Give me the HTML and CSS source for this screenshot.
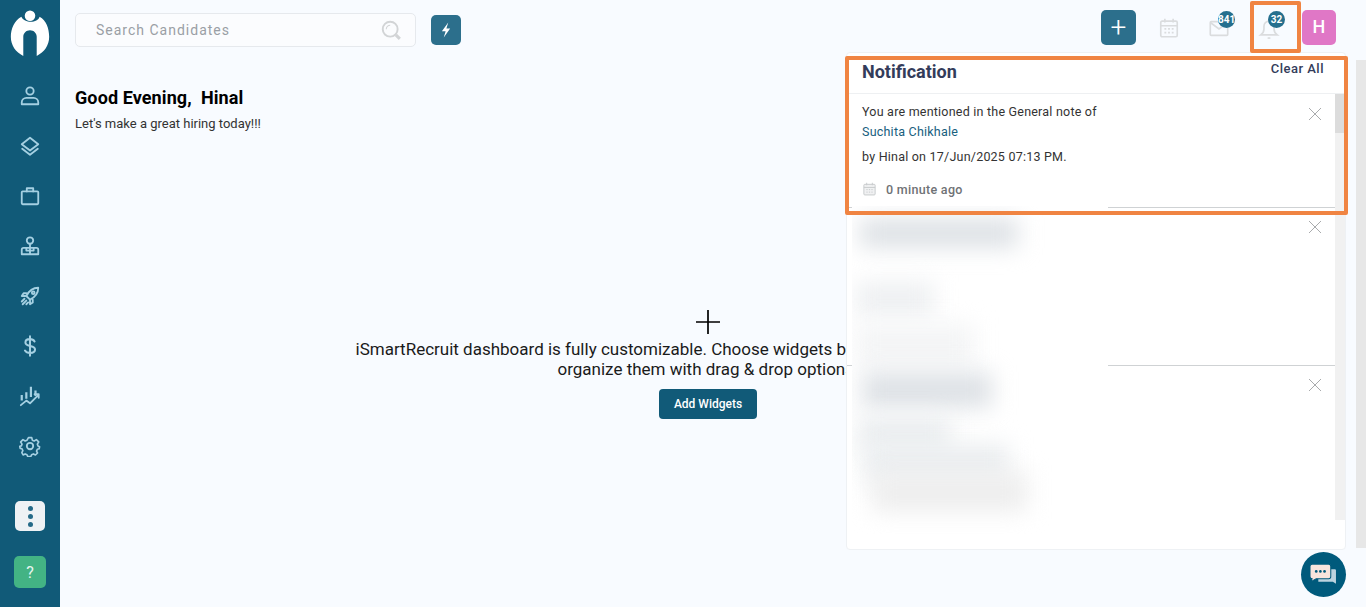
FILE: index.html
```html
<!DOCTYPE html>
<html lang="en">
  <head>
    <meta charset="UTF-8" />
    <title>iSmartRecruit Dashboard</title>
    <link rel="stylesheet" href="styles.css">
  </head>
  <body>
    <aside class="sidebar">
      <svg class="logo" viewBox="0 0 40 48" aria-hidden="true">
        <path d="M11 7C4 11 0 19 0 28c0 9 5 16 13 20V28c0-4 3-7 7-7s7 3 7 7v20c8-4 13-11 13-20 0-9-3-17-10-21-2 7-16 7-19 0z" fill="#fff"/>
        <circle cx="20" cy="6" r="5.5" fill="#fff"/>
      </svg>
      <nav class="side-nav">
        <a href="#"><svg viewBox="0 0 24 24"><circle cx="12" cy="6.500" r="4"/><path d="M3 21v-2c0-3 2.500-5 5-5h8c2.500 0 5 2 5 5v2z"/></svg></a>
        <a href="#"><svg viewBox="0 0 24 24"><path d="M12 3l9 7-9 7-9-7z"/><path d="M3.500 15l8.500 6.500 8.500-6.500"/></svg></a>
        <a href="#"><svg viewBox="0 0 24 24"><rect x="3" y="7" width="18" height="14" rx="1"/><path d="M8.500 7V3.500h7V7"/></svg></a>
        <a href="#"><svg viewBox="0 0 24 24"><circle cx="12" cy="6" r="3.500"/><path d="M12 10v11M3 21v-5c0-1 1-2 2-2h14c1 0 2 1 2 2v5zM8 14v3h8v-3"/></svg></a>
        <a href="#"><svg viewBox="0 0 24 24"><path d="M21 3c-6 0-10 3-13 9l4 4c6-3 9-7 9-13z"/><circle cx="15.500" cy="8.500" r="1.500"/><path d="M8 9H5l-2 3h4M15 16v3l-3 2v-4M6 15l-3 3M8 17l-4 4M10 19l-2 2"/></svg></a>
        <a href="#"><svg viewBox="0 0 24 24"><path d="M12 1.500v21M17 7c-1-1.600-2.800-2.500-5-2.500-3 0-5 1.500-5 3.700 0 5.100 10.500 2.500 10.500 7.600 0 2.200-2.300 3.700-5.500 3.700-2.500 0-4.500-1-5.500-2.600" stroke-width="2.200"/></svg></a>
        <a href="#"><svg viewBox="0 0 24 24"><path d="M3 11v6M8 8v7M13 2v11M18 6v6" stroke-width="2.400" stroke-linecap="butt"/><path d="M2 22l6-5 4 3 9-9M17 10h4.500v4"/></svg></a>
        <a href="#"><svg viewBox="0 0 24 24"><circle cx="12" cy="12" r="3.500"/><path d="M10 2h4l.7 3 2.300 1 2.600-1.600 2.800 2.800L20.800 9.800l.8 2.200 1.900 1-.5 2.500-2.200.5-1 2.300 1.200 2.300-2.500 2.400-2.500-1.300-2.200 1-1 2.300h-3.600l-1-2.300-2.200-1-2.500 1.300L2 20.100l1.200-2.300-1-2.300L0 15l-.5-2.500L1.400 12l.8-2.200L.6 7.200l2.800-2.800L6 6l2.300-1z" transform="translate(1.300 1.100) scale(.9)"/></svg></a>
      </nav>
      <button class="more-btn"><span></span><span></span><span></span></button>
      <button class="help-btn">?</button>
    </aside>

    <main class="main-area">
      <header class="topbar">
        <div class="search">
          <span>Search Candidates</span>
          <svg viewBox="0 0 24 24"><circle cx="10.500" cy="10.500" r="8.500"/><path d="M17 17l4.500 4.500" stroke-width="3.500"/><path d="M6 10.500a4.500 4.500 0 0 1 4.500-4.500" stroke-width="1.200"/></svg>
        </div>
        <button class="bolt-btn"><svg viewBox="0 0 24 24"><path d="M15 2L6.500 13.500h5L9 22l8.500-12h-5z"/></svg></button>
        <div class="top-actions">
          <button class="add-btn">+</button>
          <span class="top-icon"><svg viewBox="0 0 24 24"><rect x="3" y="4.500" width="18" height="17" rx="1.500"/><path d="M3 9.500h18M7.500 2v4M16.500 2v4M7 13h2M11 13h2M15 13h2M7 17h2M11 17h2M15 17h2"/></svg></span>
          <span class="top-icon"><svg viewBox="0 0 24 24"><rect x="2.500" y="5" width="19" height="15" rx="1"/><path d="M2.500 6l9.500 7 9.500-7"/></svg><b class="badge">841</b></span>
          <span class="top-icon"><svg viewBox="0 0 24 24"><path d="M3 19.500c2-1.500 3.500-3 3.500-6.500V10a5.500 5.500 0 0 1 11 0v3c0 3.500 1.500 5 3.500 6.500z"/><path d="M10.500 23h3"/></svg><b class="badge">32</b></span>
          <span class="avatar">H</span>
        </div>
      </header>

      <section class="greeting">
        <h1>Good Evening,&nbsp; Hinal</h1>
        <p>Let's make a great hiring today!!!</p>
      </section>

      <section class="empty-state">
        <svg viewBox="0 0 24 24"><path d="M12 0v24M0 12h24"/></svg>
        <p>iSmartRecruit dashboard is fully customizable. Choose widgets based on your preference and<br>organize them with drag &amp; drop options.</p>
        <button>Add Widgets</button>
      </section>
    </main>

    <div class="page-scroll"></div>

    <section class="notif-panel">
      <div class="notif-head">
        <h2>Notification</h2>
        <a href="#">Clear All</a>
      </div>
      <div class="notif-body">
        <div class="notif-list">
          <article class="notif-item first">
            <p>You are mentioned in the General note of</p>
            <p><a href="#">Suchita Chikhale</a></p>
            <p class="by">by Hinal on 17/Jun/2025 07:13 PM.</p>
            <div class="when">
              <svg viewBox="0 0 24 24"><rect x="3" y="4.500" width="18" height="17" rx="1.500"/><path d="M3 9.500h18M7.500 2v4M16.500 2v4M7 13h2M11 13h2M15 13h2M7 17h2M11 17h2M15 17h2"/></svg>
              0 minute ago
            </div>
            <svg class="close" viewBox="0 0 14 14"><path d="M1 1l12 12M13 1L1 13"/></svg>
          </article>
          <article class="notif-item second">
            <svg class="close" viewBox="0 0 14 14"><path d="M1 1l12 12M13 1L1 13"/></svg>
          </article>
          <article class="notif-item third">
            <svg class="close" viewBox="0 0 14 14"><path d="M1 1l12 12M13 1L1 13"/></svg>
          </article>
        </div>
        <div class="notif-scroll"><div></div></div>
        <div class="blur-cover">
          <i class="b1"></i><i class="b2"></i><i class="b3"></i><i class="b4"></i><i class="b5"></i><i class="b6"></i><i class="b7"></i>
        </div>
      </div>
    </section>

    <div class="mark mark-bell"></div>
    <div class="mark mark-panel"></div>

    <button class="chat-btn">
      <svg viewBox="0 0 26 22"><path d="M8 6h16a1 1 0 0 1 1 1v13l-3-2H8z" fill="#bcd3df"/><path d="M2 1h16a2 2 0 0 1 2 2v10a2 2 0 0 1-2 2H6l-5 3 1-3a2 2 0 0 1-2-2V3a2 2 0 0 1 2-2z" fill="#f8e4dd" stroke="#005a7c"/><circle cx="6" cy="8" r="1.300" fill="#005a7c"/><circle cx="10" cy="8" r="1.300" fill="#005a7c"/><circle cx="14" cy="8" r="1.300" fill="#005a7c"/></svg>
    </button>
  </body>
</html>
```

FILE: styles.css
```css
* {
  box-sizing: border-box;
}
body {
  font-family: Roboto, "Liberation Sans", sans-serif;
  margin: 0;
  display: flex;
  height: 607px;
  overflow: hidden;
  background-color: #f8fbff;
  color: #222;
}
button {
  font-family: inherit;
  border: none;
  padding: 0;
  cursor: pointer;
}
a {
  text-decoration: none;
}
svg {
  display: block;
}

/* sidebar */
.sidebar {
  width: 60px;
  flex-shrink: 0;
  background-color: #115a78;
  display: flex;
  flex-direction: column;
  align-items: center;
  padding-top: 10px;
}
.logo {
  width: 40px;
  height: 46px;
}
.side-nav {
  margin-top: 15px;
  display: flex;
  flex-direction: column;
}
.side-nav a {
  width: 60px;
  height: 50px;
  display: flex;
  align-items: center;
  justify-content: center;
}
.side-nav svg {
  width: 22px;
  height: 22px;
  fill: none;
  stroke: #a5d0e2;
  stroke-width: 2;
  stroke-linejoin: round;
  stroke-linecap: round;
}
.more-btn {
  width: 30px;
  height: 30px;
  margin-top: 30px;
  border-radius: 5px;
  background-color: #eef2f5;
  display: flex;
  flex-direction: column;
  align-items: center;
  justify-content: center;
  gap: 3px;
}
.more-btn span {
  width: 5px;
  height: 5px;
  border-radius: 50%;
  background-color: #256a88;
}
.help-btn {
  width: 32px;
  height: 32px;
  margin-top: 25px;
  border-radius: 5px;
  background-color: #43b384;
  color: #e8f6f0;
  font-size: 16px;
  font-weight: 400;
}

/* main */
.main-area {
  flex: 1;
  min-width: 0;
  padding: 0 25px 0 15px;
}
.topbar {
  height: 60px;
  display: flex;
  align-items: center;
}
.search {
  width: 341px;
  height: 34px;
  border: 1px solid #e6e9ed;
  border-radius: 5px;
  background-color: #fbfcfe;
  display: flex;
  align-items: center;
  justify-content: space-between;
  padding: 0 13px 0 20px;
  font-size: 14px;
  letter-spacing: 1px;
  color: #9a9fa5;
}
.search svg {
  width: 21px;
  height: 21px;
  fill: none;
  stroke: #d2d4d6;
  stroke-width: 2.200;
}
.bolt-btn {
  width: 30px;
  height: 30px;
  margin-left: 15px;
  border-radius: 5px;
  background-color: #2c6f8c;
  display: flex;
  align-items: center;
  justify-content: center;
}
.bolt-btn svg {
  width: 18px;
  height: 18px;
  fill: #fff;
}
.top-actions {
  margin-left: auto;
  margin-right: 5px;
  margin-bottom: 5px;
  display: flex;
  align-items: center;
}
.add-btn {
  width: 35px;
  height: 35px;
  margin-right: 8px;
  border-radius: 5px;
  background-color: #2c6f8c;
  color: #fff;
  font-size: 28px;
  font-weight: 300;
  line-height: 33px;
}
.top-icon {
  position: relative;
  width: 50px;
  display: flex;
  justify-content: center;
}
.top-icon svg {
  width: 22px;
  height: 22px;
  fill: none;
  stroke: #dadcde;
  stroke-width: 1.800;
}
.badge {
  position: absolute;
  top: -6px;
  left: 24px;
  width: 17px;
  height: 17px;
  border-radius: 50%;
  background-color: #256f8e;
  color: #fff;
  font-size: 10px;
  font-weight: 700;
  line-height: 17px;
  text-align: center;
}
.avatar {
  width: 34px;
  height: 35px;
  margin-left: 8px;
  border-radius: 5px;
  background-color: #e077c6;
  color: #fff;
  font-size: 18px;
  font-weight: 500;
  line-height: 34px;
  text-align: center;
}
.greeting {
  margin-top: 27px;
}
.greeting h1 {
  margin: 0;
  font-size: 18px;
  font-weight: 700;
  line-height: 22px;
  letter-spacing: 0.100px;
  color: #000;
}
.greeting p {
  margin: 7px 0 0;
  font-size: 13px;
  line-height: 15px;
  color: #333;
}
.empty-state {
  margin-top: 179px;
  text-align: center;
}
.empty-state svg {
  width: 24px;
  height: 24px;
  margin: 0 auto;
  fill: none;
  stroke: #000;
  stroke-width: 1.700;
}
.empty-state p {
  margin: 5px 0 10px;
  font-size: 17px;
  line-height: 20px;
  color: #1a1a1a;
  white-space: nowrap;
}
.empty-state button {
  width: 98px;
  height: 30px;
  border-radius: 4px;
  background-color: #115a78;
  color: #fff;
  font-size: 12px;
  font-weight: 500;
}
.page-scroll {
  position: absolute;
  top: 60px;
  right: 0;
  width: 10px;
  height: 488px;
  background-color: #e7e7e7;
}

/* notification dropdown */
.notif-panel {
  position: absolute;
  top: 52px;
  left: 846px;
  width: 500px;
  height: 498px;
  background-color: #fff;
  border: 1px solid #eef1f4;
  border-radius: 4px;
}
.notif-head {
  height: 41px;
  border-bottom: 1px solid #eef0f2;
  display: flex;
  justify-content: space-between;
  padding: 6px 21px 0 15px;
}
.notif-head h2 {
  margin: 0;
  font-size: 18px;
  font-weight: 700;
  line-height: 26px;
  color: #333c5a;
}
.notif-head a {
  font-size: 13px;
  font-weight: 500;
  line-height: 20px;
  letter-spacing: 0.500px;
  color: #333c5a;
}
.notif-body {
  position: relative;
  height: 427px;
  display: flex;
}
.notif-list {
  flex: 1;
}
.notif-item {
  position: relative;
  border-bottom: 1px solid #cfd2d4;
  padding: 8px 15px 0;
  font-size: 12.500px;
  color: #333;
}
.notif-item.first {
  height: 114px;
}
.notif-item.second {
  height: 158px;
}
.notif-item.third {
  height: 154px;
  border-bottom: none;
}
.notif-item p {
  margin: 0;
  height: 20px;
  line-height: 20px;
  letter-spacing: 0.220px;
}
.notif-item a {
  color: #17607e;
}
.notif-item p.by {
  margin-top: 5px;
}
.when {
  margin-top: 14px;
  display: flex;
  align-items: center;
  gap: 9px;
  font-weight: 500;
  letter-spacing: 0.300px;
  color: #6f7275;
}
.when svg {
  width: 15px;
  height: 16px;
  fill: #f0f1f2;
  stroke: #c9ccce;
  stroke-width: 1.600;
}
.close {
  position: absolute;
  top: 13px;
  right: 13px;
  width: 14px;
  height: 14px;
  fill: none;
  stroke: #a9abad;
  stroke-width: 1;
}
.second .close,
.third .close {
  top: 12px;
}
.notif-scroll {
  width: 10px;
  height: 426px;
  background-color: #f1f1f1;
}
.notif-scroll div {
  height: 39px;
  background-color: #dcdcdc;
}
.blur-cover {
  position: absolute;
  top: 112px;
  left: 5px;
  width: 256px;
  height: 328px;
  overflow: hidden;
  background-color: #fff;
}
.blur-cover i {
  position: absolute;
  filter: blur(11px);
  background-color: #dee2e6;
}
.blur-cover .b1 { left: 8px; top: 12px; width: 158px; height: 30px; }
.blur-cover .b2 { left: 4px; top: 76px; width: 78px; height: 34px; background-color: #eef0f2; }
.blur-cover .b3 { left: 4px; top: 118px; width: 118px; height: 42px; background-color: #f4f5f6; }
.blur-cover .b4 { left: 10px; top: 166px; width: 130px; height: 36px; }
.blur-cover .b5 { left: 6px; top: 210px; width: 92px; height: 36px; background-color: #ebeef0; }
.blur-cover .b6 { left: 12px; top: 238px; width: 145px; height: 38px; background-color: #ebeef0; }
.blur-cover .b7 { left: 20px; top: 266px; width: 155px; height: 40px; background-color: #eeeeee; }

/* orange highlight marks on the screenshot */
.mark {
  position: absolute;
  border: 4px solid #f08442;
  border-radius: 2px;
}
.mark-bell {
  top: 1px;
  left: 1250px;
  width: 51px;
  height: 52px;
}
.mark-panel {
  top: 56px;
  left: 845px;
  width: 503px;
  height: 159px;
}
.chat-btn {
  position: absolute;
  top: 552px;
  left: 1301px;
  width: 45px;
  height: 45px;
  border-radius: 50%;
  background-color: #005a7c;
  display: flex;
  align-items: center;
  justify-content: center;
}
.chat-btn svg {
  width: 27px;
  height: 23px;
}
```
